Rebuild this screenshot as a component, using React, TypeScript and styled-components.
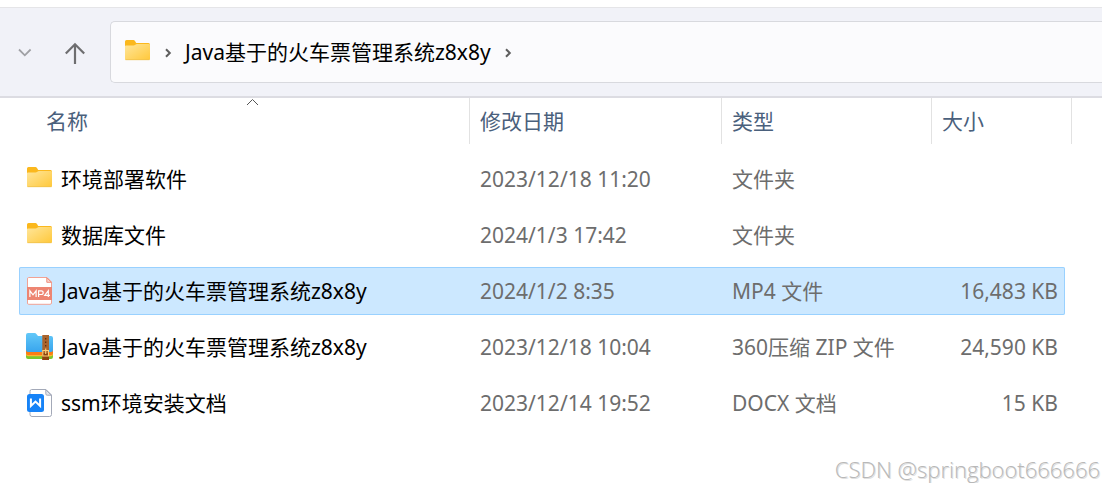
import React from "react";
import styled, { createGlobalStyle } from "styled-components";

const GlobalStyle = createGlobalStyle`
  *, *::before, *::after { box-sizing: border-box; }
  body {
    margin: 0;
    background: #fff;
    color: #000;
    font-family: "Noto Sans", "Noto Sans CJK SC", sans-serif;
    font-size: 21px;
    line-height: 28px;
  }
  button {
    border: 0;
    padding: 0;
    background: none;
    font: inherit;
    color: inherit;
    text-align: left;
    cursor: pointer;
  }
  svg { display: block; flex: none; }
`;

const Window = styled.main`
  padding-top: 7px;
`;

const Toolbar = styled.header`
  display: flex;
  align-items: center;
  padding: 13px 0 13px 10px;
  background: #f1f2f8;
  border-top: 1px solid #e5e5e8;
  border-bottom: 2px solid #dcdce2;
`;

const NavButton = styled.button`
  display: grid;
  place-items: center;
  width: 30px;
  height: 30px;
  margin-right: 20px;
`;

const AddressBar = styled.nav`
  display: flex;
  flex: 1;
  align-items: center;
  gap: 13px;
  min-width: 0;
  height: 62px;
  padding-left: 12px;
  background: #fbfbfd;
  border: 1px solid #d8d9de;
  border-right: 0;
  border-radius: 5px 0 0 5px;
`;

const Crumb = styled.button`
  white-space: nowrap;
`;

const FileTable = styled.table`
  display: block;
  font-size: 21px;
`;

const HeadGroup = styled.thead`
  display: block;
`;

const HeadRow = styled.tr`
  display: grid;
  grid-template-columns: minmax(0, 1fr) 252px 210px 140px;
  margin-right: 30px;
`;

const HeadCell = styled.th<{ $inset?: number }>`
  position: relative;
  height: 46px;
  padding: 9px 0 0 ${(p) => p.$inset ?? 10}px;
  border-right: 1px solid #e2e2e2;
  color: #4a607c;
  font-weight: 400;
  text-align: left;
`;

const SortMark = styled.svg`
  position: absolute;
  top: 0;
  left: 246px;
`;

const Body = styled.tbody`
  display: flex;
  flex-direction: column;
  gap: 8px;
  padding: 11px 37px 0 19px;
`;

const Row = styled.tr<{ $selected?: boolean }>`
  display: grid;
  grid-template-columns: minmax(0, 1fr) 252px 210px 133px;
  align-items: center;
  height: 48px;
  border-radius: 2px;
  background: ${(p) => (p.$selected ? "#cce8ff" : "transparent")};
  box-shadow: ${(p) => (p.$selected ? "inset 0 0 0 1px #99d1ff" : "none")};
`;

const NameCell = styled.td`
  display: flex;
  align-items: center;
  gap: 8px;
  padding: 0 0 0 6px;
  white-space: nowrap;
`;

const InfoCell = styled.td<{ $numeric?: boolean }>`
  padding: 0 7px 0 10px;
  color: #6d6d6d;
  text-align: ${(p) => (p.$numeric ? "right" : "left")};
  white-space: nowrap;
`;

const Watermark = styled.footer`
  padding: 28px 2px 0 0;
  color: #b8b8b8;
  font-family: "Open Sans", sans-serif;
  font-size: 22px;
  font-weight: 300;
  text-align: right;
  text-shadow: 1px 1px 0 #e0e0e0;
`;

const FolderIcon = () => (
  <svg width="28" height="28" viewBox="0 0 28 28" aria-hidden="true">
    <defs>
      <linearGradient id="folderFace" x1="0" y1="0" x2="1" y2="1">
        <stop offset="0" stopColor="#ffe69b" />
        <stop offset="1" stopColor="#ffc83a" />
      </linearGradient>
    </defs>
    <path d="M2 3.500Q2 2 3.500 2H10.500Q11.300 2 12 3L13.200 5H25.500Q27 5 27 6.500V12H2Z" fill="#fbb81d" />
    <path d="M2 8.200Q2 7.500 3 7.500H10.500Q11.500 7.500 12.300 6.700Q13 6 14 6H26Q27 6 27 7V21Q27 22 26 22H3Q2 22 2 21Z" fill="url(#folderFace)" />
    <path d="M2.500 21.700H26.500" stroke="#efc04c" strokeWidth="0.800" />
  </svg>
);

const Mp4Icon = () => (
  <svg width="28" height="28" viewBox="0 0 28 28" aria-hidden="true">
    <path d="M3.500 .5H22L26.500 5V26Q26.500 27.300 25 27.300H3.500Q2.500 27.300 2.500 26V2Q2.500 .5 3.500 .5Z" fill="#fff" stroke="#f1a294" />
    <path d="M21.800 .7V5.300H26.400Z" fill="#fbd5ce" stroke="#ee8d7b" />
    <path d="M2 10H27V23H2Z" fill="#ed8572" />
    <path d="M4.900 20V13.800L8 17.800L11.100 13.800V20M13.600 20V13.800H16.200Q18.200 13.800 18.200 15.700Q18.200 17.500 16.200 17.500H13.600M23.300 20V13.700L19.700 18.300H25" fill="none" stroke="#fff" strokeWidth="1.200" />
  </svg>
);

const ZipIcon = () => (
  <svg width="28" height="28" viewBox="0 0 28 28" aria-hidden="true">
    <defs>
      <linearGradient id="zipFace" x1="0" y1="0" x2="0" y2="1">
        <stop offset="0" stopColor="#63c8f8" />
        <stop offset="1" stopColor="#38a5ee" />
      </linearGradient>
    </defs>
    <path d="M1 19H28V24Q28 26 26 26H3Q1 26 1 24Z" fill="#7cc72c" />
    <path d="M1 17H28V21Q28 23.200 26 23.200H3Q1 23.200 1 21Z" fill="#ffb32e" />
    <path d="M1 17H28V20Q28 22 26 22H3Q1 22 1 20Z" fill="#fb7c13" />
    <path d="M1 2Q1 0 3 0H9.500Q10.800 0 11.600 1.200L13 3H26Q28 3 28 5V17Q28 19 26 19H3Q1 19 1 17Z" fill="url(#zipFace)" />
    <path d="M17.300 2H24V27H17.300Z" fill="#a9642e" />
    <path d="M17.300 20H24V27H17.300Z" fill="#8c450f" />
    <path d="M20.700 5V6.500M20.700 8.500V10M20.700 12V13.500" stroke="#5c2c0a" strokeWidth="1.200" />
    <path d="M17.800 17.500H23.500V23H17.800ZM20.700 15.500V21" fill="none" stroke="#ffd27a" strokeWidth="1.100" />
  </svg>
);

const DocIcon = () => (
  <svg width="28" height="28" viewBox="0 0 28 28" aria-hidden="true">
    <path d="M6.500 .5H21L26.500 6V25.500Q26.500 27.500 24.500 27.500H7Q5 27.500 5 25.500V2.500Q5 .5 6.500 .5Z" fill="#fff" stroke="#a3a9b8" />
    <path d="M20.800 .8V4.800Q20.800 6.200 22.200 6.200H26.300Z" fill="#e3e6ed" stroke="#a3a9b8" />
    <rect x="2" y="5" width="17" height="18" rx="2.500" fill="#1683f7" />
    <path d="M5.900 9.500V17L10.500 12.600L15.100 17V9.500" fill="none" stroke="#fff" strokeWidth="2" />
  </svg>
);

const CrumbArrow = () => (
  <svg width="8" height="12" viewBox="0 0 8 12" aria-hidden="true">
    <path d="M2 3.200L5.800 7L2 10.800" fill="none" stroke="#5e5e5e" strokeWidth="2" />
  </svg>
);

type Entry = {
  icon: React.ReactNode;
  name: string;
  date: string;
  kind: string;
  size: string;
  selected?: boolean;
};

const entries: Entry[] = [
  { icon: <FolderIcon />, name: "环境部署软件", date: "2023/12/18 11:20", kind: "文件夹", size: "" },
  { icon: <FolderIcon />, name: "数据库文件", date: "2024/1/3 17:42", kind: "文件夹", size: "" },
  { icon: <Mp4Icon />, name: "Java基于的火车票管理系统z8x8y", date: "2024/1/2 8:35", kind: "MP4 文件", size: "16,483 KB", selected: true },
  { icon: <ZipIcon />, name: "Java基于的火车票管理系统z8x8y", date: "2023/12/18 10:04", kind: "360压缩 ZIP 文件", size: "24,590 KB" },
  { icon: <DocIcon />, name: "ssm环境安装文档", date: "2023/12/14 19:52", kind: "DOCX 文档", size: "15 KB" },
];

export default function App() {
  return (
    <Window>
      <GlobalStyle />
      <Toolbar>
        <NavButton aria-label="最近浏览的位置">
          <svg width="30" height="30" viewBox="0 0 30 30" aria-hidden="true">
            <path d="M9 12.500L14.800 18.300L20.600 12.500" fill="none" stroke="#a0a1a5" strokeWidth="1.800" />
          </svg>
        </NavButton>
        <NavButton aria-label="上移一级">
          <svg width="30" height="30" viewBox="0 0 30 30" aria-hidden="true">
            <path d="M15 27V7.500M5.800 16.500L15 7.300L24.200 16.500" fill="none" stroke="#6e6e70" strokeWidth="2.200" />
          </svg>
        </NavButton>
        <AddressBar aria-label="地址">
          <FolderIcon />
          <CrumbArrow />
          <Crumb>Java基于的火车票管理系统z8x8y</Crumb>
          <CrumbArrow />
        </AddressBar>
      </Toolbar>
      <FileTable>
        <HeadGroup>
          <HeadRow>
            <HeadCell $inset={46} aria-sort="ascending">
              <SortMark width="12" height="8" viewBox="0 0 12 8" aria-hidden="true">
                <path d="M1 7L6.500 1.500L12 7" fill="none" stroke="#555" />
              </SortMark>
              <button>名称</button>
            </HeadCell>
            <HeadCell><button>修改日期</button></HeadCell>
            <HeadCell><button>类型</button></HeadCell>
            <HeadCell><button>大小</button></HeadCell>
          </HeadRow>
        </HeadGroup>
        <Body>
          {entries.map((e) => (
            <Row key={e.date} $selected={e.selected}>
              <NameCell>{e.icon}{e.name}</NameCell>
              <InfoCell>{e.date}</InfoCell>
              <InfoCell>{e.kind}</InfoCell>
              <InfoCell $numeric>{e.size}</InfoCell>
            </Row>
          ))}
        </Body>
      </FileTable>
      <Watermark>CSDN @springboot666666</Watermark>
    </Window>
  );
}
